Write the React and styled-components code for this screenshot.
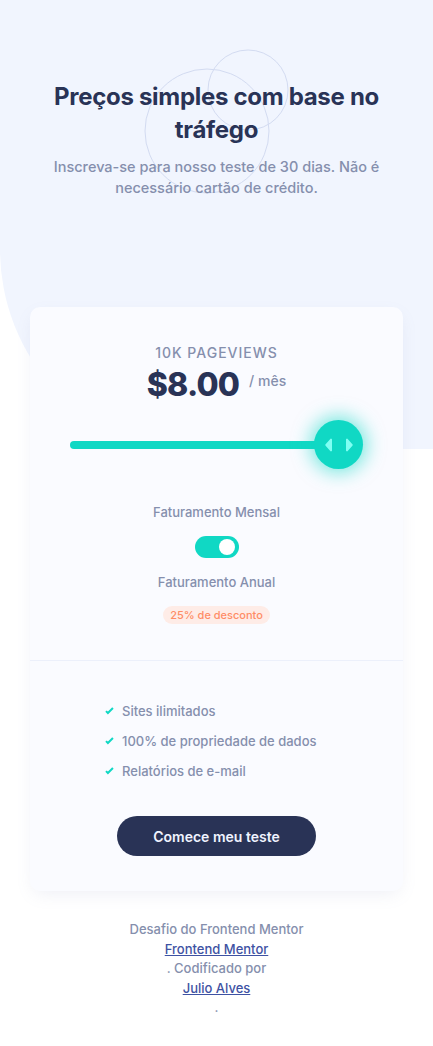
import React from "react"
import styled, { createGlobalStyle } from "styled-components"

const GlobalStyle = createGlobalStyle`
  * { box-sizing: border-box; }
  body {
    margin: 0;
    background: #ffffff;
    font-family: "Inter", "Noto Sans", sans-serif;
    -webkit-font-smoothing: antialiased;
  }
  ul { margin: 0; padding: 0; list-style: none; }
  h1, p { margin: 0; }
`

const features = [
  "Sites ilimitados",
  "100% de propriedade de dados",
  "Relatórios de e-mail",
]

const CheckIcon = () => (
  <svg width="9" height="8" viewBox="0 0 9 8">
    <path d="M1 4.134l1.907 1.908L7.949 1" fill="none" stroke="#10D8C4" strokeWidth="2" />
  </svg>
)

const ArrowsIcon = () => (
  <svg width="28" height="14" viewBox="0 0 28 14">
    <path d="M7 1.6v10.8a1 1 0 0 1-1.7.7L.6 7.7a1 1 0 0 1 0-1.4L5.3.9A1 1 0 0 1 7 1.6z" fill="#80FFF3" />
    <path d="M21 1.6v10.8a1 1 0 0 0 1.7.7l4.7-5.4a1 1 0 0 0 0-1.4L22.7.9A1 1 0 0 0 21 1.6z" fill="#80FFF3" />
  </svg>
)

const Circles = () => (
  <CirclesSvg width="433" height="200" viewBox="0 0 433 200">
    <circle cx="207" cy="131" r="62" fill="none" stroke="#d3dbf1" strokeWidth="1" />
    <circle cx="248" cy="90" r="40" fill="none" stroke="#d3dbf1" strokeWidth="1" />
  </CirclesSvg>
)

const App = () => {
  return (
    <Page>
      <GlobalStyle />
      <Header>
        <Circles />
        <Title>Preços simples com base no tráfego</Title>
        <Subtitle>
          Inscreva-se para nosso teste de 30 dias. Não é necessário cartão de crédito.
        </Subtitle>
      </Header>

      <Card>
        <PricingSection>
          <Pageviews>10K PAGEVIEWS</Pageviews>
          <PriceRow>
            <Price>$8.00</Price>
            <Period>/ mês</Period>
          </PriceRow>
          <Slider>
            <Track />
            <Thumb>
              <ArrowsIcon />
            </Thumb>
          </Slider>
          <BillingLabel $gap={34}>Faturamento Mensal</BillingLabel>
          <Toggle>
            <Knob />
          </Toggle>
          <BillingLabel>Faturamento Anual</BillingLabel>
          <Discount>25% de desconto</Discount>
        </PricingSection>

        <FeaturesSection>
          <FeatureList>
            {features.map((f) => (
              <Feature key={f}>
                <CheckIcon />
                {f}
              </Feature>
            ))}
          </FeatureList>
          <TrialButton>Comece meu teste</TrialButton>
        </FeaturesSection>
      </Card>

      <Footer>
        <span>Desafio do Frontend Mentor</span>
        <FooterLink href="#">Frontend Mentor</FooterLink>
        <span>. Codificado por</span>
        <FooterLink href="#">Julio Alves</FooterLink>
        <span>.</span>
      </Footer>
    </Page>
  )
}

/* STYLE */
const Page = styled.main`
  position: relative;
  min-height: 1046px;
  padding-bottom: 30px;

  &::before {
    content: "";
    position: absolute;
    top: 0;
    left: 0;
    right: 0;
    height: 449px;
    background: #f1f5fe;
    border-bottom-left-radius: 190px 200px;
  }
`

const Header = styled.header`
  position: relative;
  width: 340px;
  margin: 0 auto;
  padding-top: 80px;
  text-align: center;
`

const CirclesSvg = styled.svg`
  position: absolute;
  top: 0;
  left: 50%;
  margin-left: -216.5px;
  pointer-events: none;
`

const Title = styled.h1`
  position: relative;
  font-size: 24px;
  line-height: 33px;
  font-weight: 700;
  letter-spacing: -0.3px;
  color: #293356;
`

const Subtitle = styled.p`
  position: relative;
  margin-top: 10px;
  font-size: 14.5px;
  line-height: 21px;
  font-weight: 500;
  color: #858fad;
`

const Card = styled.section`
  position: relative;
  width: 373px;
  margin: 109px auto 0;
  background: #fafbff;
  border-radius: 10px;
  box-shadow: 0 6px 18px -4px rgba(127, 137, 185, 0.14);
`

const PricingSection = styled.div`
  display: flex;
  flex-direction: column;
  align-items: center;
  padding: 36px 40px 36px;
  border-bottom: 1px solid #ecf0fb;
`

const Pageviews = styled.p`
  font-size: 14px;
  line-height: 20px;
  font-weight: 500;
  letter-spacing: 1px;
  color: #858fad;
`

const PriceRow = styled.div`
  display: flex;
  align-items: flex-start;
  gap: 10px;
  margin-top: 2px;
`

const Price = styled.span`
  font-size: 32px;
  line-height: 40px;
  font-weight: 800;
  letter-spacing: -0.8px;
  color: #293356;
`

const Period = styled.span`
  font-size: 14px;
  line-height: 20px;
  margin-top: 6px;
  font-weight: 500;
  color: #858fad;
`

const Slider = styled.div`
  display: flex;
  align-items: center;
  width: 100%;
  margin-top: 15px;
`

const Track = styled.div`
  flex: 1;
  height: 8px;
  border-radius: 4px;
  background: #10d8c4;
`

const Thumb = styled.div`
  display: flex;
  align-items: center;
  justify-content: center;
  flex-shrink: 0;
  width: 49px;
  height: 49px;
  margin-left: -25px;
  border-radius: 50%;
  background: #10d8c4;
  box-shadow: 0 0 18px 4px rgba(16, 216, 196, 0.55);
`

const BillingLabel = styled.p`
  margin-top: ${({ $gap }) => $gap || 15}px;
  font-size: 13px;
  line-height: 18px;
  font-weight: 500;
  color: #858fad;
`

const Toggle = styled.div`
  display: flex;
  align-items: center;
  justify-content: flex-end;
  width: 44px;
  height: 22px;
  margin-top: 15px;
  padding: 0 4px;
  border-radius: 11px;
  background: #10d8c4;
`

const Knob = styled.span`
  width: 16px;
  height: 16px;
  border-radius: 50%;
  background: #ffffff;
`

const Discount = styled.span`
  margin-top: 15px;
  padding: 0 7px;
  height: 18px;
  line-height: 18px;
  border-radius: 9px;
  background: #feece7;
  color: #ff8c66;
  font-size: 11px;
  font-weight: 500;
`

const FeaturesSection = styled.div`
  display: flex;
  flex-direction: column;
  align-items: center;
  padding: 40px 0 35px;
`

const FeatureList = styled.ul`
  align-self: stretch;
  padding-left: 75px;
  display: flex;
  flex-direction: column;
  gap: 10px;
`

const Feature = styled.li`
  display: flex;
  align-items: center;
  gap: 8px;
  font-size: 13px;
  line-height: 20px;
  font-weight: 500;
  color: #858fad;
`

const TrialButton = styled.button`
  width: 199px;
  height: 40px;
  margin-top: 35px;
  border: none;
  border-radius: 20px;
  background: #293356;
  color: #f0f3ff;
  font-family: "Inter", sans-serif;
  font-size: 14px;
  font-weight: 600;
  cursor: pointer;
`

const Footer = styled.footer`
  display: flex;
  flex-direction: column;
  align-items: center;
  margin-top: 29px;
  font-size: 13px;
  line-height: 19.5px;
  font-weight: 500;
  color: #858fad;
`

const FooterLink = styled.a`
  color: #3e52a3;
  text-decoration: underline;
`

export default App
